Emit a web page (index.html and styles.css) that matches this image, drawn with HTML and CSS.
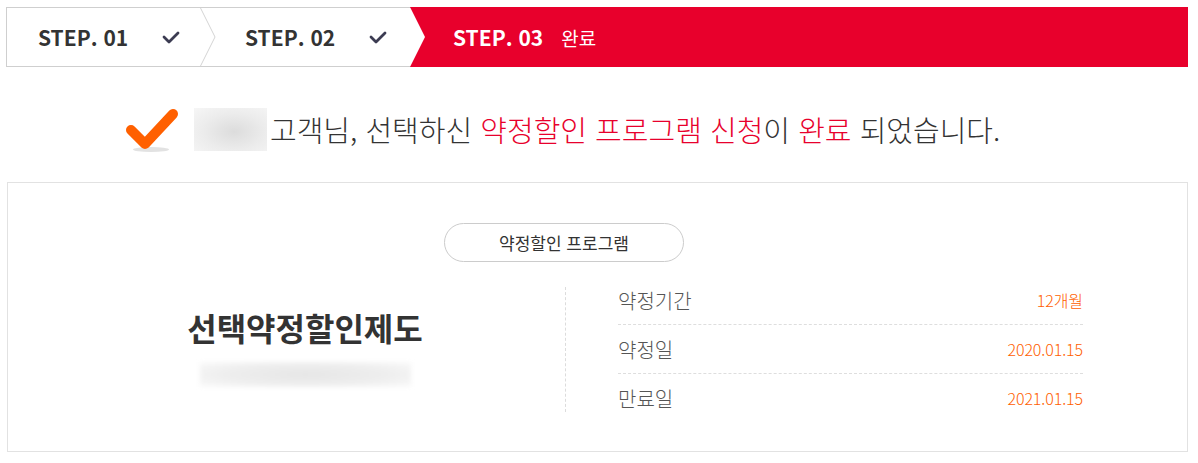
FILE: index.html
```html
<!DOCTYPE html>
<html lang="ko">
<head>
<meta charset="utf-8">
<title>신청 완료</title>
<link rel="stylesheet" href="styles.css">
</head>
<body>
<div class="page">
  <ol class="steps">
    <li class="step step-done s1">
      <span class="step-label">STEP. 01</span>
      <svg class="step-check" width="18" height="13" viewBox="0 0 18 13"><polyline points="2,6 7,11 16,2" fill="none" stroke="#3c3c52" stroke-width="2.8" stroke-linecap="round" stroke-linejoin="round"/></svg>
    </li>
    <li class="step-sep"><svg width="16" height="58" viewBox="0 0 16 58"><polyline points="0.5,0 15,29 0.5,58" fill="none" stroke="#d4d4d4" stroke-width="1"/></svg></li>
    <li class="step step-done s2">
      <span class="step-label">STEP. 02</span>
      <svg class="step-check" width="18" height="13" viewBox="0 0 18 13"><polyline points="2,6 7,11 16,2" fill="none" stroke="#3c3c52" stroke-width="2.8" stroke-linecap="round" stroke-linejoin="round"/></svg>
    </li>
    <li class="step step-current">
      <span class="step-label">STEP. 03</span>
      <span class="step-state">완료</span>
    </li>
  </ol>

  <div class="done-msg">
    <svg class="done-icon" width="56" height="48" viewBox="0 0 56 48">
      <ellipse cx="27" cy="44.5" rx="18" ry="2.5" fill="#e2e2e2"/>
      <polyline points="7,25 21,39 49,9" fill="none" stroke="#ff6000" stroke-width="10" stroke-linecap="round" stroke-linejoin="round"/>
    </svg>
    <span class="masked-name"></span>
    <p class="done-text">고객님, 선택하신 <em>약정할인 프로그램 신청</em>이 <em>완료</em> 되었습니다.</p>
  </div>

  <section class="result">
    <div class="pill">약정할인 프로그램</div>
    <div class="result-body">
      <div class="plan">
        <h2 class="plan-name">선택약정할인제도</h2>
        <span class="masked-line"></span>
      </div>
      <dl class="terms">
        <div class="term"><dt>약정기간</dt><dd>12개월</dd></div>
        <div class="term"><dt>약정일</dt><dd>2020.01.15</dd></div>
        <div class="term"><dt>만료일</dt><dd>2021.01.15</dd></div>
      </dl>
    </div>
  </section>
</div>
</body>
</html>
```

FILE: styles.css
```css
* { box-sizing: border-box; }
html, body { margin: 0; padding: 0; background: #fff; }
body {
  font-family: "Noto Sans CJK KR", "Noto Sans", sans-serif;
  color: #333;
}
.page {
  width: 1182px;
  margin: 7px 0 0 6px;
}

/* steps */
.steps {
  list-style: none;
  margin: 0;
  padding: 0;
  display: flex;
  height: 60px;
  border: 1px solid #cfcfcf;
  border-right: 0;
}
.step {
  display: flex;
  align-items: center;
  height: 58px;
}
.s1 { width: 193px; padding-left: 31px; }
.s2 { width: 194px; padding-left: 29px; }
.step-sep { width: 16px; height: 58px; display: flex; }
.step-label {
  font-size: 21px;
  font-weight: 700;
  color: #333;
  letter-spacing: 0;
}
.step-check { margin-left: 34px; }
.step-current {
  flex: 1;
  margin-top: -1px;
  height: 60px;
  background: #e8002c;
  padding-left: 43px;
  clip-path: polygon(0 0, 100% 0, 100% 100%, 0 100%, 15px 50%);
}
.step-current .step-label { color: #fff; }
.step-state {
  margin-left: 18px;
  font-size: 19px;
  color: #fff;
}

/* message */
.done-msg {
  display: flex;
  align-items: center;
  height: 48px;
  margin-top: 38px;
  padding-left: 118px;
}
.done-icon { display: block; }
.masked-name {
  width: 73px;
  height: 43px;
  margin-left: 14px;
  background: radial-gradient(ellipse at 55% 55%, #dcdcdc 0%, #ececec 55%, #f6f6f6 100%);
}
.done-text {
  margin: 0 0 0 3px;
  font-size: 29px;
  font-weight: 300;
  color: #333;
  letter-spacing: 0;
  white-space: nowrap;
}
.done-text em { font-style: normal; color: #e8002c; }

/* result box */
.result {
  margin: 29px 0 0 1px;
  border: 1px solid #e2e2e2;
  padding: 40px 104px 29px 37px;
  display: flex;
  flex-direction: column;
  align-items: center;
}
.pill {
  width: 240px;
  height: 39px;
  border: 1px solid #cccccc;
  border-radius: 20px;
  display: flex;
  align-items: center;
  justify-content: center;
  font-size: 17px;
  color: #333;
}
.result-body {
  align-self: stretch;
  margin-top: 14px;
  display: flex;
  align-items: center;
}
.plan {
  width: 521px;
  padding: 20px 0 25px;
  border-right: 1px dashed #dcdcdc;
  display: flex;
  flex-direction: column;
  align-items: center;
}
.plan-name {
  margin: 0;
  height: 40px;
  line-height: 40px;
  font-size: 32px;
  font-weight: 700;
  color: #333;
  letter-spacing: 0;
}
.masked-line {
  display: block;
  margin-top: 15px;
  width: 211px;
  height: 25px;
  background: radial-gradient(ellipse at 50% 50%, #e6e6e6 0%, #eeeeee 55%, #fafafa 100%);
  filter: blur(2px);
}
.terms {
  flex: 1;
  margin: 0 0 0 52px;
  padding: 0;
}
.term {
  display: flex;
  align-items: center;
  justify-content: space-between;
  height: 49px;
  border-bottom: 1px dashed #dedede;
}
.term:last-child { border-bottom: 0; height: 48px; }
.term dt {
  font-size: 20px;
  font-weight: 300;
  color: #555;
}
.term dd {
  margin: 0;
  font-size: 16px;
  font-weight: 300;
  color: #ff5e00;
  letter-spacing: -0.1px;
}
```
